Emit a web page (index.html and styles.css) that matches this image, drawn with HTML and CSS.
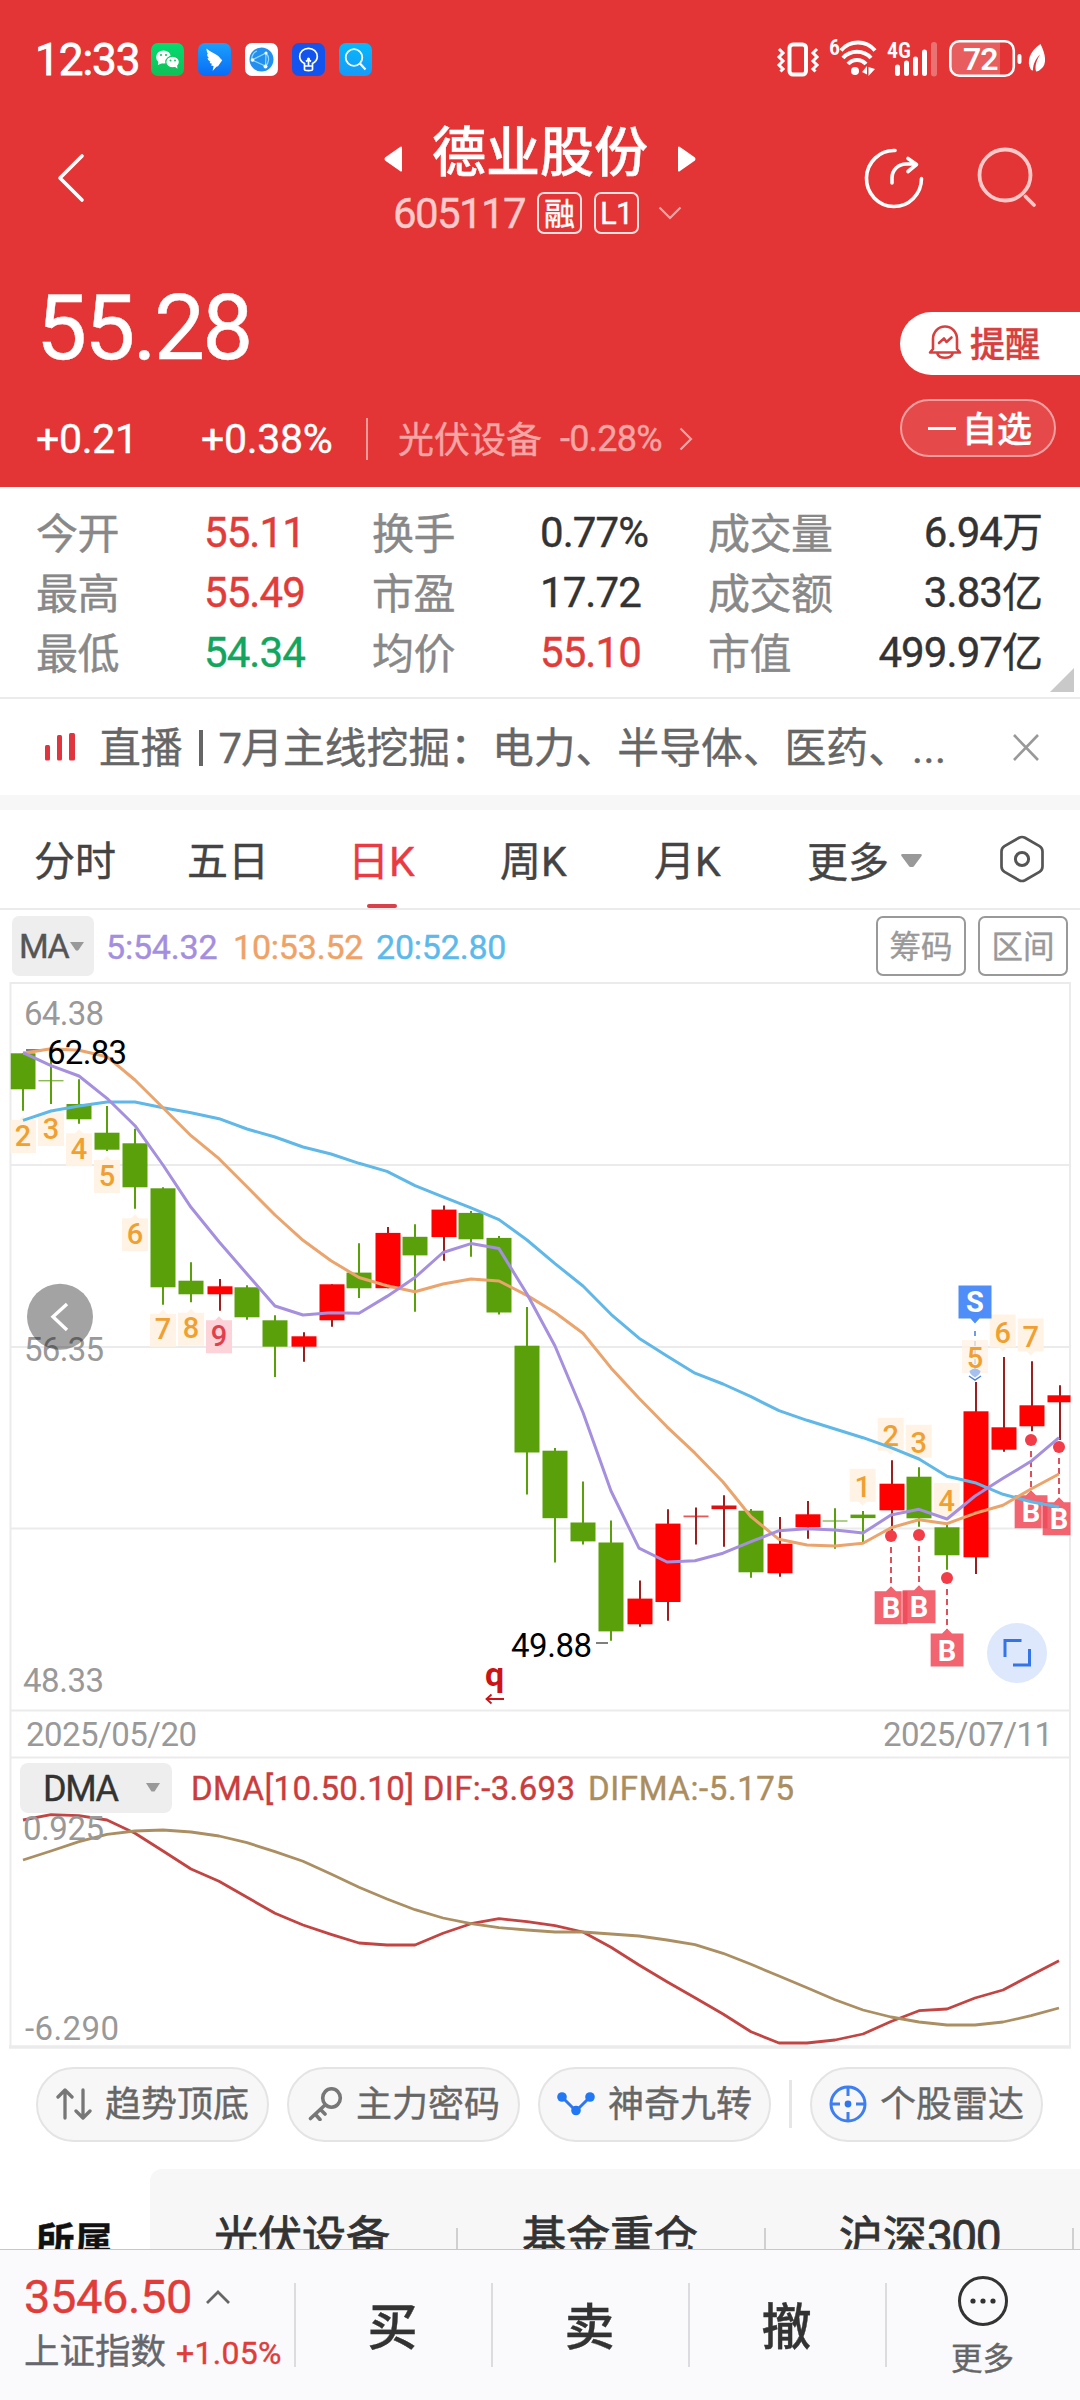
FILE: index.html
```html
<!DOCTYPE html>
<html lang="zh-CN">
<head>
<meta charset="utf-8">
<title>德业股份 605117</title>
<link rel="stylesheet" href="styles.css">
</head>
<body>
<header class="header">
  <div class="status">
    <span class="clock">12:33</span>
    <div class="apps">
      <svg class="app" viewBox="0 0 33 33"><defs><linearGradient id="gw" x2="0" y2="1"><stop stop-color="#02dc70"/><stop offset="1" stop-color="#12bf56"/></linearGradient><linearGradient id="gd" x2="0" y2="1"><stop stop-color="#1aa0fb"/><stop offset="1" stop-color="#0a6cf6"/></linearGradient><linearGradient id="gs" x2="0" y2="1"><stop stop-color="#05b9fb"/><stop offset="1" stop-color="#1899f8"/></linearGradient></defs>
        <rect width="33" height="33" rx="7" fill="url(#gw)"/><ellipse cx="12.5" cy="14" rx="7.4" ry="6.6" fill="#fff"/><path d="M7.5 18l-.6 4 4-1.8z" fill="#fff"/><ellipse cx="21.6" cy="19" rx="6.8" ry="5.8" fill="#fff" stroke="#0bcb62" stroke-width="1.2"/><path d="M23.5 23.5l3 2.2-.4-3.4z" fill="#fff"/><g fill="#0bcb62"><circle cx="10" cy="12" r="1.1"/><circle cx="15" cy="12" r="1.1"/><circle cx="19.5" cy="17.4" r="1"/><circle cx="24" cy="17.4" r="1"/></g></svg>
      <svg class="app" viewBox="0 0 33 33"><rect width="33" height="33" rx="7" fill="url(#gd)"/><path d="M8.5 5.5c2 2.500 13 7 13.500 9.500l2.200 2.200-4.200 6-1.600.6-3.800 4.200 1-5-2.600-.6 1-1.600-2.400-.8.8-1.300c-2-1-2.700-2.200-2.800-3.600l1.500.2c-1.400-1.400-2-2.600-2-4.300l1 .3c-1-1.800-1.700-3.600-1.600-5.800z" fill="#fff"/></svg>
      <svg class="app" viewBox="0 0 33 33"><rect width="33" height="33" rx="7" fill="#fff"/><circle cx="16.500" cy="16.500" r="12" fill="#2390f0"/><path d="M7 17L21 10 20.500 23zM21 10c4 4 3 10-.5 13M7 17c-1-4 2-8 5-9" fill="none" stroke="#8fd8ff" stroke-width="1.200"/><g fill="#fff"><circle cx="7.500" cy="17" r="1.800"/><circle cx="21" cy="10" r="1.600"/><circle cx="20.500" cy="23.500" r="2"/></g></svg>
      <svg class="app" viewBox="0 0 33 33"><rect width="33" height="33" rx="7" fill="#1454ee"/><path d="M12.500 23v-2.500c-3-1.600-4.800-4-4.800-7a8.800 8.200 0 0 1 17.600 0c0 3-1.800 5.400-4.800 7V23zM12.500 23v3.500c0 1.500 8 1.500 8 0V23M16.500 23v-7M14 18.500l2.500-2 2.500 2" fill="none" stroke="#fff" stroke-width="1.700"/><circle cx="16.500" cy="16" r="1.500" fill="#fff"/></svg>
      <svg class="app" viewBox="0 0 33 33"><rect width="33" height="33" rx="7" fill="url(#gs)"/><circle cx="15" cy="14.500" r="8.300" fill="none" stroke="#fff" stroke-width="1.800"/><path d="M21 20.500l5.500 6" stroke="#fff" stroke-width="2.200"/></svg>
    </div>
    <svg class="signals" viewBox="770 34 280 46" fill="none" stroke="#fff">
      <rect x="789.500" y="43.500" width="16.500" height="30" rx="3.500" stroke-width="4"/>
      <path d="M779 48l4 4-4 4 4 4-4 4 4 4-2.500 2.500M817 48l-4 4 4 4-4 4 4 4-4 4 2.500 2.500" stroke-width="3"/>
      <text x="829" y="54" class="tiny">6</text>
      <path d="M841 49.500a22 22 0 0 1 34 0M843 57a19 19 0 0 1 28 0M848 63a12 12 0 0 1 18 0" stroke-width="4"/>
      <circle cx="855" cy="70" r="4" fill="#fff" stroke="none"/>
      <path d="M862 71l5-6v8.500zM868.500 66v9l6.500-7z" fill="#fff" stroke="none"/>
      <text x="887" y="57" class="tiny">4G</text>
      <path d="M897.500 66v6.500M906.500 62v10.500M915.500 58v14.500M924.500 51v21.500" stroke-width="5" stroke-linecap="round"/>
      <path d="M934 44v28.500" stroke-width="6" stroke-opacity=".3" stroke-linecap="round"/>
      <path d="M959 41h41v33h-41a8 8 0 0 1-8-8V49a8 8 0 0 1 8-8z" fill="#fff" fill-opacity=".2" stroke="none"/>
      <rect x="950.300" y="40.300" width="63.500" height="34.500" rx="9" stroke-width="2.600"/>
      <path d="M1019.500 55v6" stroke-width="4" stroke-linecap="round"/>
      <text x="963" y="68.500" class="battery">72</text>
      <path d="M1031 69c-5-9-1-19 9.500-26 5 10 7 20 .5 25-1 1-3 2.500-5 2.500-1.500-6 1-12 4-17-4 4-7 9-7 16z" fill="#fff" stroke="none"/>
    </svg>
  </div>
  <nav class="nav">
    <svg class="back" viewBox="0 0 30 50"><path d="M26 3L4 25l22 22" fill="none" stroke="#fff" stroke-width="3.600" stroke-linecap="round" stroke-linejoin="round"/></svg>
    <div class="stock">
      <div class="stock-name">
        <svg width="18" height="26" viewBox="0 0 18 26"><path d="M18 1v24q-1 1-2 0L1 14.500q-1-1.500 0-3L16 1q1-1 2 0z" fill="#fff"/></svg>
        <h1>德业股份</h1>
        <svg width="18" height="26" viewBox="0 0 18 26"><path d="M0 1v24q1 1 2 0L17 14.500q1-1.500 0-3L2 1Q1 0 0 1z" fill="#fff"/></svg>
      </div>
      <div class="stock-code">
        <span class="num code">605117</span><span class="badge">融</span><span class="badge num">L1</span>
        <svg width="24" height="14" viewBox="0 0 24 14"><path d="M1.500 1.500L12 12 22.500 1.500" fill="none" stroke="#f6a5a5" stroke-width="2.200"/></svg>
      </div>
    </div>
    <div class="nav-tools">
      <svg width="60" height="62" viewBox="864 147 60 62" fill="none" stroke="#fff" stroke-width="3.600" stroke-linecap="round" stroke-linejoin="round"><path d="M895 150.500a27.500 28 0 1 0 26.500 28"/><path d="M892 183v-5a14 14 0 0 1 14-14h10M908 158.500l8.500 6-8.500 7"/></svg>
      <svg width="60" height="62" viewBox="977 147 60 62" fill="none" stroke="#fcc8c8" stroke-width="3.800" stroke-linecap="round"><circle cx="1005" cy="175" r="25.500"/><path d="M1025.500 196.500l8.500 8.500"/></svg>
    </div>
  </nav>
  <section class="quote">
    <div class="quote-main">
      <div class="price num">55.28</div>
      <div class="change">
        <span class="num chg">+0.21</span><span class="num pct">+0.38%</span>
        <span class="sector">光伏设备</span><span class="num sector-pct">-0.28%</span>
        <svg width="14" height="24" viewBox="0 0 14 24"><path d="M1.500 1.500L12 12 1.500 22.500" fill="none" stroke="#f6a5a5" stroke-width="2.200"/></svg>
      </div>
    </div>
    <div class="quote-actions">
      <button class="remind"><svg width="34" height="36" viewBox="928 326 34 36" fill="none" stroke="#d8403f" stroke-width="2.600" stroke-linejoin="round" stroke-linecap="round"><path d="M933 351v-10a12 12.500 0 0 1 24 0v10l3 3.500h-30zM937.500 356c2 5 13 5 15 0M939 345l5-4.500 2.500 3.500 5-4.500"/></svg>提醒</button>
      <button class="watch"><i></i>自选</button>
    </div>
  </section>
</header>

<section class="stats">
  <span class="k">今开</span><span class="v num up">55.11</span><span class="k">换手</span><span class="v num">0.77%</span><span class="k">成交量</span><span class="v num end">6.94<b>万</b></span>
  <span class="k">最高</span><span class="v num up">55.49</span><span class="k">市盈</span><span class="v num">17.72</span><span class="k">成交额</span><span class="v num end">3.83<b>亿</b></span>
  <span class="k">最低</span><span class="v num down">54.34</span><span class="k">均价</span><span class="v num up">55.10</span><span class="k">市值</span><span class="v num end">499.97<b>亿</b></span>
  <svg class="corner" viewBox="0 0 24 24"><path d="M24 0v24H0z" fill="#c9c9c9"/></svg>
</section>

<section class="news">
  <svg width="30" height="28" viewBox="45 735 30 28" fill="#e0353f"><rect x="45" y="747" width="5" height="15.500" rx="1.500"/><rect x="57" y="737" width="5" height="25.500" rx="1.500"/><rect x="69" y="735" width="6" height="27.500" rx="1.500"/></svg>
  <p>直播<i class="bar"></i><span class="num">7</span>月主线挖掘：电力、半导体、医药、<span class="num dots">...</span></p>
  <svg width="26" height="27" viewBox="0 0 26 27"><path d="M1 1l24 25M25 1L1 26" stroke="#999" stroke-width="2.600"/></svg>
</section>

<nav class="periods">
  <a>分时</a><a>五日</a><a class="on">日<span class="num">K</span></a><a>周<span class="num">K</span></a><a>月<span class="num">K</span></a>
  <a class="more">更多<svg width="21" height="13" viewBox="0 0 21 13"><path d="M1.500 0h18q2 0 1 2l-7 9.500q-1 1.500-2 1.500h-2q-1 0-2-1.500L.5 2q-1-2 1-2z" fill="#999"/></svg></a>
  <svg class="gear" width="44" height="48" viewBox="0 0 44 48" fill="none" stroke="#555"><path d="M19 2.800q3-1.600 6 0l14.500 8.400q3 1.800 3 5.200v15.200q0 3.400-3 5.200L25 45.200q-3 1.600-6 0L4.500 36.800q-3-1.800-3-5.200V16.400q0-3.400 3-5.200z" stroke-width="2.700"/><circle cx="22" cy="24" r="6.600" stroke-width="3"/></svg>
</nav>

<section class="ma num">
  <span class="ma-pick">MA<svg width="14" height="9" viewBox="0 0 14 9"><path d="M0 0h14L8.500 8q-1.500 1.500-3 0z" fill="#999"/></svg></span>
  <span class="m5">5:54.32</span><span class="m10">10:53.52</span><span class="m20">20:52.80</span>
  <div class="ma-btns"><button>筹码</button><button>区间</button></div>
</section>

<svg id="chart" class="chart num" viewBox="0 978 1080 1072" width="1080" height="1072"></svg>

<section class="pills">
  <div class="pill"><svg width="36" height="32" viewBox="0 0 36 32" fill="none" stroke="#777" stroke-width="3.300" stroke-linecap="round" stroke-linejoin="round"><path d="M9 30V2.500M2 9l7-7 7 7M27 2v27.500M20 23l7 7 7-7"/></svg>趋势顶底</div>
  <div class="pill"><svg width="36" height="34" viewBox="0 0 36 34" fill="none" stroke="#777" stroke-width="3" stroke-linecap="round" stroke-linejoin="round"><ellipse cx="24.500" cy="11" rx="8.800" ry="9.200" stroke-width="3.600"/><path d="M18 18L3.500 31.500M8.500 27.500l4.500 5M13.500 22.500l4.500 4.500" stroke-width="3.600"/></svg>主力密码</div>
  <div class="pill"><svg width="38" height="26" viewBox="0 0 38 26"><path d="M5 6l14 14L33 6" fill="none" stroke="#2f77ee" stroke-width="3"/><g fill="#2277f5"><circle cx="5" cy="6" r="4.800"/><circle cx="19" cy="19.500" r="4.800"/><circle cx="33" cy="6" r="4.800"/></g></svg>神奇九转</div>
  <i class="pill-sep"></i>
  <div class="pill"><svg width="38" height="38" viewBox="0 0 38 38" fill="none" stroke="#3d7ff0" stroke-width="3"><circle cx="19" cy="19" r="17"/><path d="M19 2v9M19 27v9M2 19h9M27 19h9"/><circle cx="19" cy="19" r="3.400" fill="#2f77ee" stroke="none"/></svg>个股雷达</div>
</section>

<section class="belong">
  <strong>所属</strong>
  <div class="belong-list"><span>光伏设备</span><span>基金重仓</span><span>沪深<em class="num">300</em></span></div>
</section>

<footer class="dock">
  <div class="index">
    <div class="index-value"><span class="num">3546.50</span><svg width="26" height="16" viewBox="0 0 26 16"><path d="M2 14L13 3l11 11" fill="none" stroke="#666" stroke-width="2.800"/></svg></div>
    <div class="index-name">上证指数<span class="num">+1.05%</span></div>
  </div>
  <a>买</a><a>卖</a><a>撤</a>
  <div class="dock-more"><svg width="52" height="52" viewBox="0 0 52 52"><circle cx="26" cy="26" r="23.500" fill="none" stroke="#333" stroke-width="3"/><g fill="#333"><circle cx="16" cy="26" r="2.600"/><circle cx="26" cy="26" r="2.600"/><circle cx="36" cy="26" r="2.600"/></g></svg>更多</div>
</footer>
<script src="chart.js"></script>
</body>
</html>
```
FILE: styles.css
```css
* { box-sizing: border-box; }
body { margin: 0; width: 1080px; height: 2400px; overflow: hidden; background: #fff; color: #333; font-family: "Noto Sans CJK SC", sans-serif; display: flex; flex-direction: column; -webkit-text-stroke: .4px; }
h1, p { margin: 0; font-weight: inherit; }
button { font: inherit; background: none; border: 0; padding: 0; color: inherit; }
svg { flex: none; display: block; }
b, i, em { font-style: normal; }
.num { font-family: Roboto, sans-serif; font-weight: 400; letter-spacing: -.022em; }

/* red header */
.header { height: 487px; background: #e33535; color: #fff; flex: none; }
.status { height: 118px; display: flex; align-items: center; padding-left: 35px; }
.clock { font: 400 44px/50px Roboto, sans-serif; width: 116px; letter-spacing: -1px; -webkit-text-stroke: .8px; margin-top: 2px; }
.apps { display: flex; gap: 14px; }
.app { width: 33px; height: 33px; }
.signals { width: 280px; height: 46px; margin: -2px 30px 0 auto; -webkit-text-stroke: 0; }
.signals text { fill: #fff; stroke: none; font-family: "Roboto Condensed", Roboto, sans-serif; font-weight: 600; }
.signals .tiny { font-size: 22px; }
.signals .battery { font: 600 32px Roboto, sans-serif; letter-spacing: -1px; }

.nav { height: 120px; display: grid; grid-template-columns: 330px 1fr 330px; align-items: center; }
.back { width: 30px; height: 50px; margin-left: 56px; }
.stock-name { display: flex; justify-content: center; align-items: center; height: 60px; margin-top: -1px; }
.stock-name svg { margin-top: 16px; }
.stock-name h1 { font-size: 54px; line-height: 60px; font-weight: 500; margin: 0 30px; height: 64px; }
.stock-code { display: flex; align-items: center; height: 42px; margin-top: 11px; padding-left: 63px; }
.code { font-size: 42px; line-height: 42px; color: #fccaca; width: 144px; margin-top: 2px; }
.nav .code { letter-spacing: -1.600px; }
.badge { width: 45px; height: 42px; border: 2px solid #fbe0e0; border-radius: 7px; font-size: 31px; line-height: 35px; text-align: center; margin-right: 12px; }
.badge.num { line-height: 39px; }
.stock-code svg { margin-left: 7px; }
.nav-tools { display: flex; gap: 53px; padding-left: 114px; }

.quote { display: flex; justify-content: space-between; }
.quote-main { padding: 44px 0 0 36px; }
.price { font-size: 91px; line-height: 90px; padding-top: 1px; }
.quote .price { letter-spacing: -2.800px; }
.change { display: flex; align-items: center; height: 42px; margin-top: 45px; white-space: nowrap; }
.change .num { letter-spacing: -.3px; }
.chg, .pct { font-size: 41px; line-height: 42px; }
.chg { width: 165px; }
.pct { width: 167px; border-right: 2px solid #f09a9a; }
.sector { font-size: 36px; line-height: 38px; color: #f6a5a5; margin: -4px 18px 0 30px; }
.sector-pct { font-size: 36px; line-height: 38px; color: #f6a5a5; width: 119px; }
.change .sector-pct { letter-spacing: -.8px; }
.quote-actions { width: 180px; padding-top: 74px; }
.quote-actions button { display: flex; align-items: center; font-size: 35px; font-weight: 500; line-height: 40px; }
.quote-actions .remind { width: 180px; height: 63px; gap: 8px; border-radius: 32px 0 0 32px; padding: 0 0 3px 28px; background: #fff; color: #d8403f; }
.quote-actions .watch { width: 156px; height: 58px; margin-top: 24px; border: 2px solid #f0a0a0; border-radius: 29px; background: #e64949; padding: 0 0 3px 26px; gap: 6px; }
.watch i { width: 28px; height: 3px; background: #fff; margin-top: 3px; }

/* key figures */
.stats { position: relative; height: 212px; flex: none; border-bottom: 2px solid #ebebeb; padding: 16px 37px 0 36px; display: grid; grid-template-columns: 168px 168px 168px 168px 150px 1fr; grid-auto-rows: 60px; align-items: center; }
.stats .k { font-size: 42px; line-height: 60px; color: #888; margin-top: -5px; letter-spacing: -.5px; }
.stats .v { font-size: 42px; line-height: 60px; }
.stats b { font: 400 41px/40px "Noto Sans CJK SC", sans-serif; letter-spacing: 0; }
.stats .end { text-align: right; white-space: nowrap; margin-left: -40px; }
.stats .up { color: #e03c3a; }
.stats .down { color: #12a55e; }
.corner { position: absolute; right: 6px; bottom: 5px; width: 24px; height: 24px; }

.news { height: 96px; flex: none; display: flex; align-items: center; padding: 0 41px 0 45px; color: #666; }
.news p { font-size: 41.800px; line-height: 60px; margin: -1px auto 0 24px; white-space: nowrap; }
.bar { display: inline-block; width: 4px; height: 36px; background: #666; margin: 0 16px -3px 16px; }
.news .dots { letter-spacing: .5px; margin-left: 2px; }

/* period tabs */
.periods { height: 115px; flex: none; border-top: 15px solid #f7f7f7; border-bottom: 2px solid #ebebeb; display: flex; padding-left: 34px; align-items: center; color: #444; }
.periods a { font-size: 41px; line-height: 96px; height: 98px; margin-top: -1px; width: 153px; white-space: nowrap; position: relative; }
.periods a:nth-child(2) { width: 161px; }
.periods a:nth-child(3) { width: 152px; }
.periods a:nth-child(4) { width: 154px; }
.periods .on { color: #e93b44; }
.on::after { content: ""; position: absolute; left: 19px; bottom: 0; width: 30px; height: 4px; border-radius: 2px; background: #d8404a; }
.periods .more { display: flex; align-items: center; gap: 12px; width: 193px; }
.more svg { margin-top: 3px; }

.ma { height: 68px; flex: none; display: flex; align-items: flex-start; padding: 6px 12px 0; font-size: 34px; line-height: 62px; white-space: nowrap; letter-spacing: -.2px; }
.ma-pick { width: 82px; height: 60px; padding-left: 7px; background: #eee; border-radius: 7px; color: #555; display: flex; align-items: center; gap: 2px; margin-right: 12px; letter-spacing: -1.500px; }
.m5 { color: #a48ee0; width: 127px; }
.m10 { color: #f0a266; width: 143px; }
.m20 { color: #5bb9ec; }
.ma-btns { margin-left: auto; display: flex; gap: 12px; }
.ma-btns button { width: 90px; height: 60px; border: 2px solid #999; border-radius: 7px; font: 400 31.500px/50px "Noto Sans CJK SC", sans-serif; letter-spacing: 0; color: #999; padding-bottom: 4px; }

.chart { flex: none; letter-spacing: 0; }
.chart text { font-size: 33px; fill: #999; -webkit-text-stroke: 0; }
.chart .black { fill: #000; }
.chart .tag { font-size: 29px; font-weight: 500; fill: #f0a030; text-anchor: middle; }
.chart .nine { fill: #e0404c; }
.chart .mark { font-size: 29px; font-weight: 700; fill: #fff; text-anchor: middle; }
.chart .q { font: 700 34px Roboto, sans-serif; fill: #cc1418; }
.chart .dif { fill: #cb3c3d; stroke: #cb3c3d; stroke-width: .4px; }
.chart .difma { fill: #ab8d5e; stroke: #ab8d5e; stroke-width: .4px; }
.chart .dma { fill: #333; font-size: 36px; stroke: #333; stroke-width: .4px; }

/* shortcut pills */
.pills { height: 119px; flex: none; padding: 17px 37px 0 36px; display: flex; align-items: flex-start; justify-content: space-between; }
.pill { width: 233px; height: 75px; border: 2px solid #e4e4e4; border-radius: 38px; background: #f7f7f7; color: #666; font-size: 36px; line-height: 64px; display: flex; justify-content: center; gap: 13px; padding: 0 0 6px; white-space: nowrap; }
.pill svg { align-self: center; margin-top: 4px; }
.pill-sep { width: 3px; height: 48px; background: #e6e6e6; margin-top: 13px; }

.belong { height: 80px; flex: none; display: flex; overflow: hidden; }
.belong strong { width: 150px; padding-left: 36px; font-size: 38.500px; line-height: 60px; padding-top: 39px; color: #111; }
.belong-list { flex: 1; background: #f7f7f7; border-radius: 12px 0 0 0; display: flex; padding-top: 35px; font-size: 44px; line-height: 60px; color: #333; -webkit-text-stroke: .8px; }
.belong-list span { width: 308px; padding-left: 64px; position: relative; white-space: nowrap; }
.belong-list span:nth-child(3) { padding-left: 73px; }
.belong-list span::after { content: ""; position: absolute; right: 0; top: 24px; width: 2px; height: 50px; background: #d0d0d0; }
.belong-list em { font-size: 46px; letter-spacing: -1.500px; }

/* bottom bar */
.dock { height: 151px; flex: none; border-top: 1px solid #c8c8cc; background: #fafafc; display: flex; }
.index { width: 294px; padding: 23px 0 0 24px; white-space: nowrap; }
.index-value { display: flex; align-items: center; gap: 13px; color: #e03c3a; font-size: 47px; line-height: 48px; }
.index-value .num { letter-spacing: -.4px; }
.index-name { font-size: 35.500px; line-height: 50px; color: #66676c; margin-top: 3px; }
.index-name .num { color: #e03c3a; font-size: 32px; margin-left: 10px; letter-spacing: .3px; }
.dock a { width: 197px; position: relative; text-align: center; font-size: 50px; line-height: 147px; font-weight: 500; }
.dock a::before, .dock-more::before { content: ""; position: absolute; left: 0; top: 33px; width: 2px; height: 84px; background: #dcdce0; }
.dock-more { flex: 1; position: relative; display: flex; flex-direction: column; align-items: center; font-size: 31.500px; line-height: 44px; color: #666; padding-top: 25px; }
.dock-more svg { margin-bottom: 7px; }
```
FILE: chart.js
```js
const G = '#5aa00a', R = '#fe0000', RW = '#9c2020';
const X = i => 23 + 28 * i;

// [colour, body top, body bottom, wick top, wick bottom]
const candles = [
  ['g',1053.3,1089.3,1053.3,1110.7],['g',1080,1081.4,1060,1104],['g',1104,1119.3,1079.3,1123.7],['g',1132.7,1149.7,1106,1151],
  ['g',1143.3,1187.3,1128.7,1208.7],['g',1188.3,1287.3,1187.3,1304.7],['g',1280.7,1294.3,1262.3,1302.3],['r',1286.3,1294.3,1279,1310.7],
  ['g',1287.3,1317.3,1285.3,1319.7],['g',1320.3,1346.7,1315.3,1377],['r',1336.3,1346.7,1332.3,1361.7],['r',1284.3,1320.3,1284.3,1326.7],
  ['g',1272.6,1288.3,1243.3,1298],['r',1232.9,1288.2,1227.1,1288.2],['g',1236.8,1255.4,1224.3,1311.8],['r',1209.6,1237.1,1205.4,1260.7],
  ['g',1212.9,1239.3,1211,1256.8],['g',1237.9,1312.5,1236,1314.6],['g',1345.7,1452.5,1307,1494.6],['g',1450.7,1518.2,1448,1562.5],
  ['g',1522.5,1541.4,1481.4,1544.6],['g',1542.5,1631.4,1520.4,1640.7],['r',1598.6,1624.3,1580.4,1626.8],['r',1523.6,1602,1509.3,1620.7],
  ['r',1515.5,1517.3,1507.5,1544.6],['r',1505.5,1509.2,1495.3,1546.7],['g',1510.7,1572.3,1509,1577.7],['r',1543.7,1573.3,1517,1576.7],
  ['r',1514.3,1527.3,1501,1538.7],['g',1520.3,1521.7,1508.3,1548.7],['g',1514.6,1518.1,1511,1544],['r',1483.7,1510.3,1460.3,1530.7],
  ['g',1476.7,1518.3,1467.3,1526.7],['g',1527.3,1555.3,1525,1569.7],['r',1411.3,1557.3,1382,1574],['r',1427.3,1449.7,1357,1451.7],
  ['r',1405.3,1426.3,1361.3,1431.3],['r',1395.3,1402.3,1385.3,1440]
];
const ma5 = [1052.7,1065.7,1076,1098.3,1125.7,1165,1207.3,1241.7,1274,1306,1315,1312.7,1313.3,1296.4,1277.5,1252.5,1243.6,1248.6,1294,1346,1412.5,1491,1548.2,1562,1560.7,1553.2,1541.7,1530.7,1528.7,1530,1533,1515,1509.3,1519,1496,1478.3,1461.3,1437.7];
const ma10 = [1053.3,1048.7,1050.3,1056.7,1080,1107.7,1135.7,1158.7,1186.7,1215,1240.3,1260.7,1277.5,1285.7,1291.8,1284,1279,1281,1295.4,1312.5,1333.2,1367.9,1398.2,1426.8,1453.2,1482,1516.7,1539.3,1545,1546,1543.3,1527.7,1519.7,1523.7,1513.3,1505.3,1489,1474];
const ma20 = [1120.3,1111,1106,1102,1102,1107.7,1112.7,1118.7,1129,1137,1147,1154,1163.3,1171.4,1185.7,1196.8,1207.9,1219.6,1240,1263.6,1286,1314.3,1338.2,1356,1373.2,1384,1396.7,1410.7,1420.3,1429,1437.7,1447.7,1459,1476.3,1482.7,1494.3,1501.7,1507];
const dif = [1820,1814.7,1815.7,1820,1833.3,1851,1869,1881.3,1897.3,1913.3,1925,1934.3,1943,1945,1945,1933.3,1923.7,1918.7,1921.7,1925.7,1932,1947.3,1965,1981.7,1997.7,2014,2031.7,2043,2043,2040,2034,2021.5,2010.7,2009,1998,1990,1975.3,1960.7];
const difma = [1860,1851,1841.7,1834.3,1831,1830,1832,1836,1842.7,1851.7,1861.3,1874,1887.3,1899,1909.7,1918,1923.7,1927.7,1930,1932,1932,1934,1936,1940,1944.7,1953.3,1964.3,1976,1987.7,1999.7,2010,2017,2022,2025,2025,2022,2015.7,2008];

const line = (ys, c, w = 3) => `<polyline fill="none" stroke="${c}" stroke-width="${w}" stroke-linejoin="round" points="${ys.map((y, i) => X(i) + ',' + y).join(' ')}"/>`;
const txt = (s, x, y, w, cls = '') => `<text class="${cls}" x="${x}" y="${y}" textLength="${w}">${s}</text>`;

let o = '';
// frame and grid
o += `<g fill="none" stroke="#ebebeb" stroke-width="2"><path d="M10 1165h1060M10 1347h1060M10 1528.500h1060M10 1710.500h1060M10 1757.500h1060"/><path d="M10.500 2047V983h1059.500v1064"/><path d="M9 2047h1062" stroke-width="3.500"/></g>`;

o += `<clipPath id="c"><rect x="10.500" y="983" width="1060" height="1064"/></clipPath><g clip-path="url(#c)">`;
candles.forEach(([k, t, b, wt, wb], i) => {
  const x = X(i) + (k === 'r' ? 1 : 0), thin = b - t < 2.5;
  o += `<path d="M${x} ${wt}V${wb}" stroke="${k === 'g' ? G : RW}" stroke-width="2"/>`;
  o += `<rect x="${x - 12.5}" y="${t}" width="25" height="${b - t}" fill="${k === 'g' ? G : (b - t < 4 ? '#dd1111' : R)}" ${thin ? 'opacity=".7"' : ''}/>`;
});

// sequence counters: [index, digit, box top, pointer up?]
[[0,2,1120,1],[1,3,1113,1],[2,4,1133.3,1],[3,5,1160,1],[4,6,1218.3,1],[5,7,1313.7,1],[6,8,1312.7,1],[7,9,1320.3,1],
 [30,1,1468.7,0],[31,2,1417.7,0],[32,3,1424.7,0],[33,4,1483,0],[35,6,1314.5,0],[36,7,1318.5,0]].forEach(([i, d, y, up]) => {
  const x = X(i) - (i > 29 ? .3 : 0), n = d === 9;
  const p = up ? `M${x - 4} ${y}l4-4 4 4z` : `M${x - 4} ${y + 33}l4 4 4-4z`;
  o += `<path d="M${x - 13} ${y}h26v33h-26z${p}" fill="${n ? '#fbd3d8' : '#fff2e4'}" fill-opacity="${n ? 1 : .92}"/>`;
  o += `<text class="tag ${n ? 'nine' : ''}" x="${x}" y="${y + (up ? 25.5 : 28)}">${d}</text>`;
});

// sell marker
o += `<path d="M958.500 1285.500h33v33h-12l-4.500 5-4.500-5h-12z" fill="#4f8ef9"/><text class="mark" x="975" y="1312">S</text>`;
o += `<path d="M975 1331v5M975 1341v28" stroke="#6f9be8" stroke-width="2" stroke-dasharray="5 4"/>`;
o += `<path d="M962 1340h26v33h-26z" fill="#fff2e4" fill-opacity=".75"/><text class="tag" x="975" y="1368">5</text>`;
o += `<path d="M969.500 1371q5.500-5 11 0 0 3-5.500 6.500-5.500-3.500-5.500-6.500z" fill="#a6c1ee"/><path d="M969 1376l6 4 6-4" fill="none" stroke="#4d83d8" stroke-width="1.500"/>`;

// buy markers: [dot x, dot y, box top]
[[891,1536,1591.3],[919,1535,1590.3],[947,1578,1633.6],[1031,1440,1495.3],[1059,1447,1502.3]].forEach(([x, y, t]) => {
  o += `<circle cx="${x}" cy="${y}" r="6" fill="#f23c48"/><path d="M${x} ${y + 11}V${t - 4}" stroke="#e0505c" stroke-width="2" stroke-dasharray="6 4"/>`;
  o += `<path d="M${x - 16.5} ${t}h11.500l5-5 5 5h11.500v33h-33z" fill="#f04a58" fill-opacity=".86"/><path d="M${x - 17} ${t}v33" stroke="#fff" stroke-opacity=".6"/><text class="mark" x="${x}" y="${t + 27}">B</text>`;
});

o += `<path d="M26 1050h18" stroke="#555" stroke-width="1.500"/>` + line(ma20, '#5fb8e8') + line(ma10, '#eba46c') + line(ma5, '#a58fdf') + '</g>';
o += txt('64.38', 24, 1025, 80) + txt('62.83', 47, 1063.5, 80, 'black') + txt('48.33', 23, 1692, 81) + txt('56.35', 24, 1361, 80);
o += txt('49.88', 511, 1657, 81, 'black') + `<path d="M596 1643h12" stroke="#555" stroke-width="1.500"/>`;
o += `<text class="q" x="485" y="1685.500">q</text><path d="M504 1699h-17M491.500 1694.500l-5 4.500 5 4.500" fill="none" stroke="#cc1418" stroke-width="1.800"/>`;

// round controls over the chart
o += `<circle cx="60" cy="1316.700" r="33" fill="#000" fill-opacity=".36"/><path d="M67 1304L53 1316.700 67 1330" fill="none" stroke="#fff" stroke-width="3.400"/>`;
o += `<circle cx="1017" cy="1653" r="30" fill="#dde8fd"/><path d="M1005 1657v-16.500h16.500M1029.500 1649v16h-16.500" fill="none" stroke="#3375e6" stroke-width="3"/>`;

// dates and lower indicator
o += txt('2025/05/20', 26, 1746, 171) + txt('2025/07/11', 883, 1746, 170);
o += line(dif, '#c24443', 2.8) + line(difma, '#ab8f62', 2.8);
o += `<rect x="20" y="1763" width="152" height="50" rx="8" fill="#eee"/>` + txt('DMA', 43, 1801, 76, 'dma') + `<path d="M146 1783h14l-5.500 8.500h-3z" fill="#999"/>`;
o += txt('DMA[10.50.10] DIF:-3.693', 191, 1800, 384, 'dif') + txt('DIFMA:-5.175', 588, 1800, 206, 'difma');
o += txt('0.925', 23, 1839.500, 81) + txt('-6.290', 25, 2039.500, 94);
document.getElementById('chart').innerHTML = o;
```
